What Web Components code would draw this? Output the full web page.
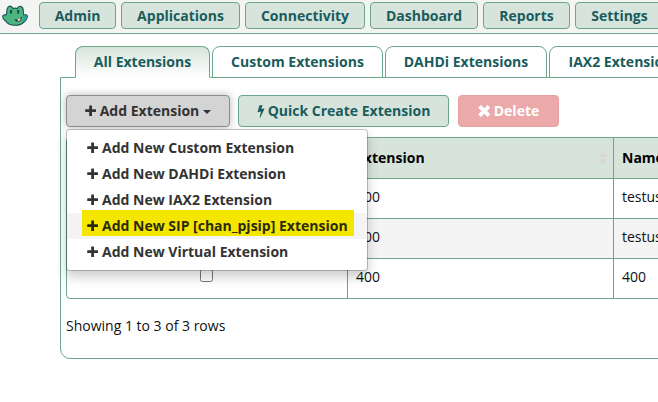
<!DOCTYPE html>
<html lang="en">
<head>
<meta charset="utf-8">
<title>Extensions</title>
<style>
html, body { margin: 0; height: 402px; overflow: hidden; background: #fff; }
body {
  --line: #6aa789; --mint: #d7e4dc; --teal: #1a5c5c;
  font: 14px/20px "Open Sans", sans-serif; color: #111; width: 658px;
}
</style>
</head>
<body>
<pbx-app></pbx-app>
<script>
const define = (name, html, init) => customElements.define(name, class extends HTMLElement {
  constructor() {
    super();
    this.attachShadow({ mode: 'open' }).innerHTML = html;
  }
  connectedCallback() { if (init) init(this, this.shadowRoot); }
});

const glyphs = {
  plus: '<svg width="12" height="12" viewBox="0 0 12 12"><path fill="currentColor" d="M4.2 .9q0-.5.5-.5h1.8q.5 0 .5.5v3.4h3.5q.5 0 .5.5v1.8q0 .5-.5.5H7v3.4q0 .5-.5.5H4.700q-.5 0-.5-.5V7.100H.700q-.5 0-.5-.5V4.800q0-.5.5-.5h3.500z"/></svg>',
  bolt: '<svg width="8" height="13" viewBox="0 0 8 13"><path fill="currentColor" d="M2.500 .3h3.100L4.200 4 7 3.400q.5 0 .4.500L3.300 12.400q-.6.400-.7-.2L4 6.500.900 7.200Q.500 7.200.600 6.700z"/></svg>',
  times: '<svg width="13" height="12" viewBox="0 0 13 12"><path fill="none" stroke="currentColor" stroke-width="3.800" d="M1.600 1.300 11 10.700M11 1.300 1.600 10.700"/></svg>'
};

define('ui-icon', `<style>:host{display:inline-block;flex:none}svg{display:block}</style><span></span>`,
  (el, r) => { r.querySelector('span').innerHTML = glyphs[el.getAttribute('name')]; });

define('frog-logo', `<style>:host{display:block;width:26px;height:22px}svg{display:block}</style>
<svg width="26" height="22" viewBox="0 0 26 22">
<path d="M7.300 1.300Q9.500.500 11 3.500q2-.700 4.200 0Q16.500.600 19 1.400q2.500 1 2.300 5.100-.1 2 .7 3.500 3.500-.800 3.400 1.300-.2 2.500-2.200 4.500-3.400 4.500-10.200 4.500-6.500 0-9.400-4.300Q.500 13.500.700 11.200q.3-2 3.400-1.200.8-1.800.8-3.700 0-4.100 2.400-5z" fill="#4cb57f" stroke="#194d55" stroke-width="1.100"/>
<path d="M9 5v3.500M16.200 5v3.500" stroke="#174650" stroke-width="2"/>
<path d="M20.700 10.500q2.700 4-2.200 7.500 4-.700 5.500-3.500 1.500-2.700.6-3.700z" fill="#23a6a0"/>
<path d="M12 14.200q5 1.200 8.300-2.600-.2 4.800-4.500 5.300-2-.1-3.800-2.700z" fill="#17424d"/>
<path d="M15 16.600q3.200.100 4.500-3.800-2.800 1.500-4.500 3.800z" fill="#ef9550"/>
<path d="m15.500 14.600 2.800-1-.8 1.500-1.500.6z" fill="#fff"/></svg>`);

define('nav-item', `<style>:host{display:block;box-sizing:border-box;flex:none;height:27px;border:1px solid var(--line);border-radius:4px;background:var(--mint);color:var(--teal);font-weight:700;line-height:26px;text-align:center}</style><slot></slot>`);

define('nav-bar', `<style>:host{display:flex;box-sizing:border-box;height:34px;background:#f4f4f4;border-bottom:1px solid var(--line);padding:2px 0 0 2px;overflow:hidden}
frog-logo{margin:3px 11px 0 0;flex:none}.n{display:flex;gap:5px}</style><frog-logo></frog-logo><div class="n"><slot></slot></div>`);

define('tab-item', `<style>:host{display:block;box-sizing:border-box;flex:none;height:32px;border:1px solid var(--line);border-radius:8px 8px 0 0;background:#fff;color:var(--teal);font-weight:700;line-height:30px;text-align:center;white-space:nowrap}
:host([active]){border-bottom-color:#fff;background:linear-gradient(var(--mint),#fff)}</style><slot></slot>`);

define('ui-button', `<style>:host{display:flex;align-items:center;justify-content:center;box-sizing:border-box;flex:none;height:32px;border:1px solid var(--line);border-radius:4px;background:var(--mint);color:var(--teal);font-weight:700;gap:3px}
:host([kind=open]){background:#d4d4d4;border-color:#8c8c8c;color:#333;box-shadow:0 0 8px rgba(0,0,0,.28)}
:host([kind=danger]){background:#eca9a9;border-color:#eba0a0;color:#fff}
.c{display:none;border:4px solid transparent;border-top-color:currentColor;border-bottom:0;margin:1px 0 0 1px}
:host([kind=open]) .c{display:block}</style><slot name="icon"></slot><span><slot></slot></span><i class="c"></i>`);

define('menu-item', `<style>:host{display:flex;align-items:center;box-sizing:border-box;height:26px;padding-left:20px;gap:3px;color:#333;font-weight:700;position:relative;white-space:nowrap}
:host([marked]){background:#f4f4f4}
:host([marked])::before{content:"";position:absolute;left:15px;top:-3px;width:272px;height:26px;background:#f5e600}
:host([marked]){color:#2b2b0c}
ui-icon,span{position:relative}</style><ui-icon name="plus"></ui-icon><span><slot></slot></span>`);

define('drop-menu', `<style>:host{display:block;position:absolute;left:0;top:34px;z-index:5;box-sizing:border-box;width:302px;height:142px;padding:5px 0;background:#fff;border:1px solid rgba(0,0,0,.22);background-clip:padding-box;border-radius:4px;box-shadow:0 6px 12px rgba(0,0,0,.2)}</style><slot></slot>`);

define('data-grid', `<style>:host{display:block;width:620px;box-sizing:border-box;border:1px solid var(--line);border-radius:4px;overflow:hidden}
.r{display:grid;grid-template-columns:281px 266px 1fr;height:39px;border-bottom:1px solid var(--line)}
.r:last-child{border:0}.h{height:40px;background:var(--mint);font-weight:700;color:#000}.alt{background:#f4f4f4}
.r>div{display:flex;align-items:center;padding:0 8px;border-right:1px solid var(--line);justify-content:space-between;box-sizing:border-box;padding-bottom:3px}
.r>div:first-child{justify-content:center;padding:0 2px 6px 0}.h>div{padding-bottom:0}
input{width:13px;height:13px;margin:0}.s{margin-right:-2px}</style>
<div class="r h"><div></div><div>Extension<svg class="s" width="8" height="14"><path d="M0 6 4 0l4 6zM0 8l4 6 4-6z" fill="#d9d6da"/></svg></div><div>Name</div></div>
<div class="r"><div><input type="checkbox"></div><div>200</div><div>testuser</div></div>
<div class="r alt"><div><input type="checkbox"></div><div>300</div><div>testuser2</div></div>
<div class="r"><div><input type="checkbox"></div><div>400</div><div>400</div></div>`);

define('pbx-app', `<style>:host{display:block;height:402px;overflow:hidden}
.tabs{display:flex;gap:2px;margin:12px 0 0 75px}
.panel{box-sizing:border-box;width:640px;height:282px;margin:-1px 0 0 60px;border:1px solid var(--line);border-radius:0 0 10px 10px;padding:17px 0 0 5px}
.tabs{position:relative;z-index:1}
.bar{display:flex;position:relative;margin-bottom:10px}
.foot{margin-top:17px}</style>
<nav-bar>
<nav-item style="width:77px">Admin</nav-item><nav-item style="width:119px">Applications</nav-item><nav-item style="width:120px">Connectivity</nav-item><nav-item style="width:108px">Dashboard</nav-item><nav-item style="width:87px">Reports</nav-item><nav-item style="width:89px">Settings</nav-item>
</nav-bar>
<div class="tabs"><tab-item active style="width:135px">All Extensions</tab-item><tab-item style="width:171px">Custom Extensions</tab-item><tab-item style="width:162px">DAHDi Extensions</tab-item><tab-item style="width:150px">IAX2 Extensions</tab-item></div>
<div class="panel">
<div class="bar">
<ui-button kind="open" style="width:164px"><ui-icon slot="icon" name="plus"></ui-icon>Add Extension</ui-button>
<ui-button style="width:211px;margin:0 9px 0 8px"><ui-icon slot="icon" name="bolt"></ui-icon>Quick Create Extension</ui-button>
<ui-button kind="danger" style="width:101px"><ui-icon slot="icon" name="times"></ui-icon>Delete</ui-button>
<drop-menu><menu-item>Add New Custom Extension</menu-item><menu-item>Add New DAHDi Extension</menu-item><menu-item>Add New IAX2 Extension</menu-item><menu-item marked>Add New SIP [chan_pjsip] Extension</menu-item><menu-item>Add New Virtual Extension</menu-item></drop-menu>
</div>
<data-grid></data-grid>
<div class="foot">Showing 1 to 3 of 3 rows</div>
</div>`);
</script>
</body>
</html>
